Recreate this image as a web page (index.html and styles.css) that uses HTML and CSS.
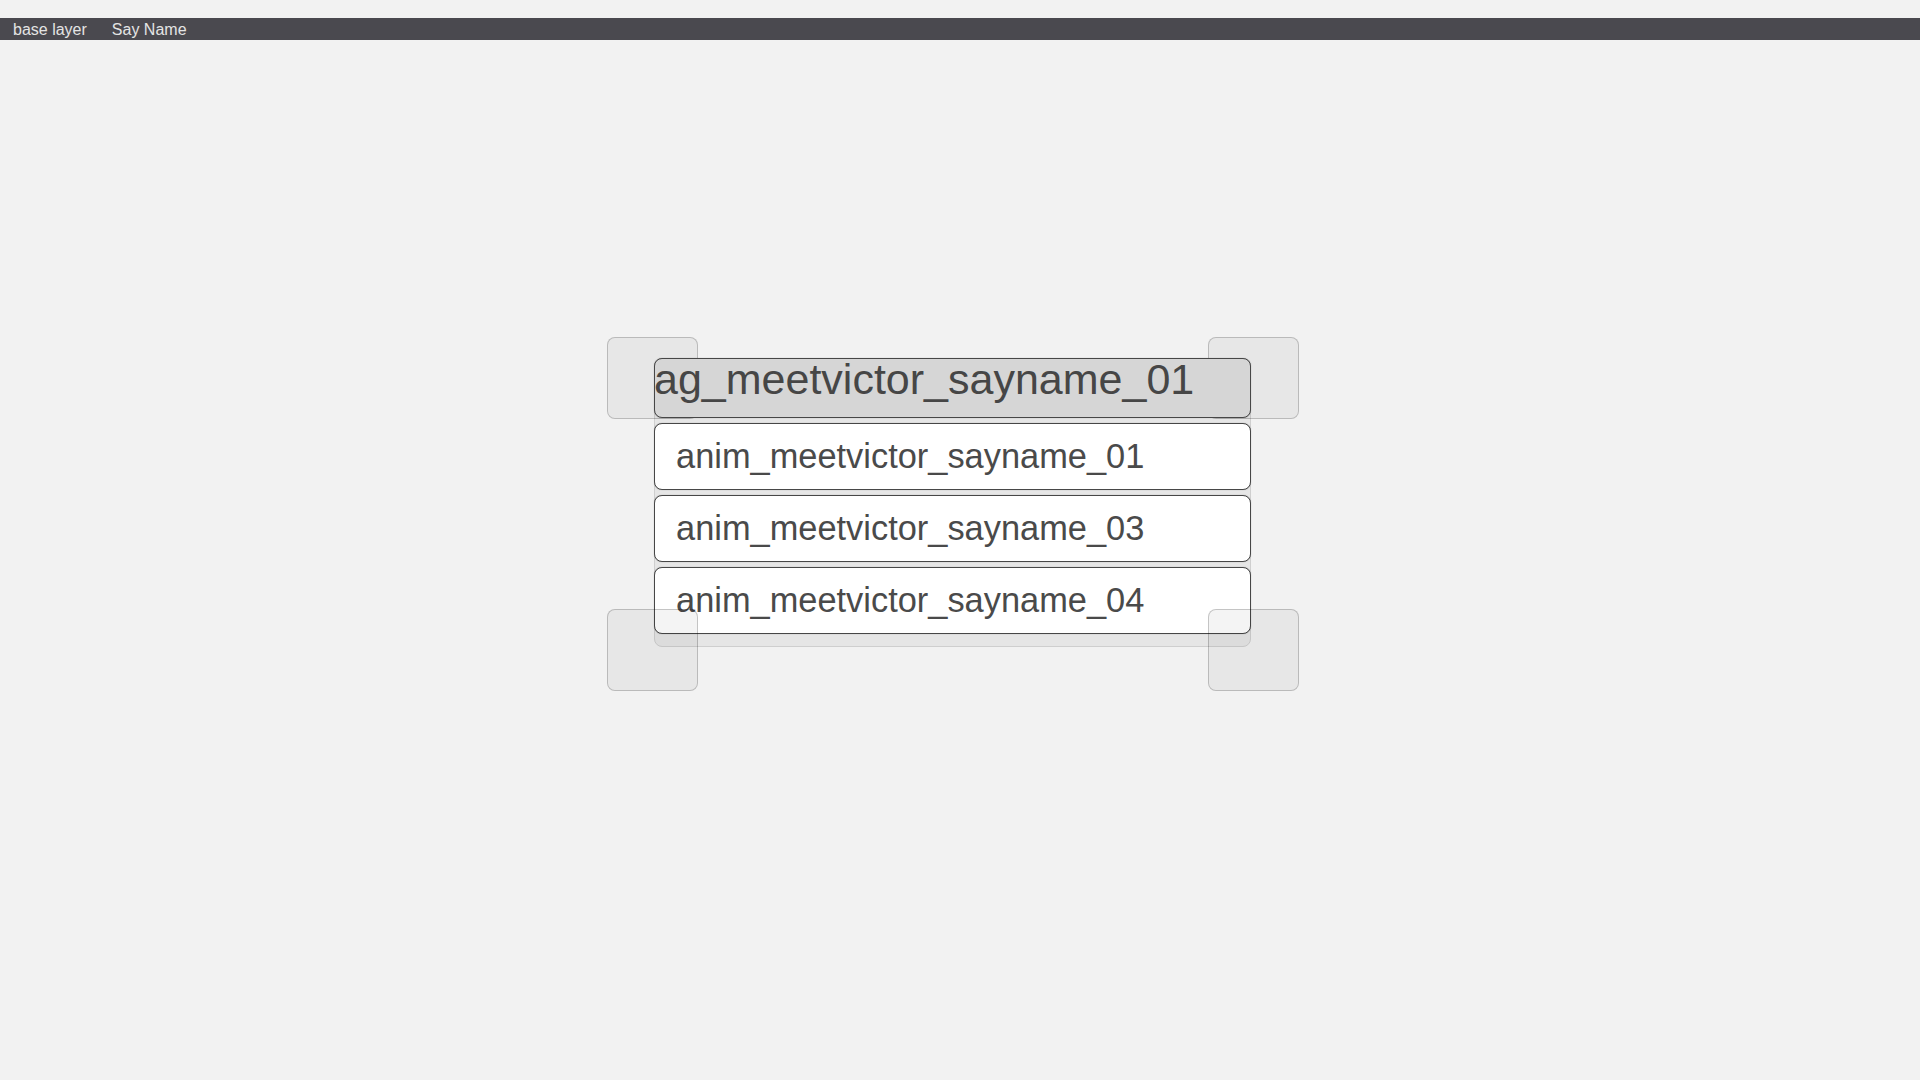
FILE: index.html
```html
<!DOCTYPE html>
<html>
<head>
<meta charset="utf-8">
<title>Say Name</title>
<link rel="stylesheet" href="styles.css">
</head>
<body>
<div class="topbar">
  <span class="crumb">base layer</span>
  <span class="crumb">Say Name</span>
</div>
<main class="stage">
  <div class="widget">
    <div class="handle tl"></div>
    <div class="handle tr"></div>
    <div class="handle bl"></div>
    <div class="handle br"></div>
    <div class="panel">
      <div class="header">ag_meetvictor_sayname_01</div>
      <ul class="list">
        <li class="item">anim_meetvictor_sayname_01</li>
        <li class="item">anim_meetvictor_sayname_03</li>
        <li class="item">anim_meetvictor_sayname_04</li>
      </ul>
    </div>
  </div>
</main>
</body>
</html>
```
FILE: styles.css
```css
html, body {
  margin: 0;
  padding: 0;
  background: #f2f2f2;
  font-family: "Liberation Sans", Arial, sans-serif;
}
body {
  width: 1920px;
  height: 1080px;
  overflow: hidden;
}
.topbar {
  margin-top: 18px;
  height: 22px;
  background: #4a494f;
  display: flex;
  align-items: center;
  gap: 25px;
  padding-left: 13px;
  box-sizing: border-box;
}
.crumb {
  color: #e4e4e4;
  font-size: 16px;
  line-height: 22px;
  padding-top: 1px;
}
.stage {
  padding-top: 297px;
  padding-left: 607px;
}
.widget {
  position: relative;
  width: 692px;
  height: 354px;
}
.handle {
  position: absolute;
  width: 91px;
  height: 82px;
  box-sizing: border-box;
  border: 1px solid rgba(0, 0, 0, 0.2);
  border-radius: 8px;
  background: rgba(0, 0, 0, 0.045);
  z-index: 1;
}
.tl { left: 0; top: 0; }
.tr { right: 0; top: 0; }
.bl { left: 0; bottom: 0; }
.br { right: 0; bottom: 0; }
.panel {
  position: absolute;
  left: 47px;
  top: 21px;
  width: 597px;
  height: 289px;
  box-sizing: border-box;
  background: #e6e6e6;
  border: 1px solid #cfcfcf;
  border-radius: 8px;
  display: flex;
  flex-direction: column;
  gap: 5px;
}
.header {
  position: relative;
  z-index: 2;
  margin: -1px -1px 0 -1px;
  height: 60px;
  box-sizing: border-box;
  background: #d6d6d6;
  border: 1.5px solid #474747;
  border-radius: 8px;
  color: #464646;
  font-size: 43px;
  line-height: 41px;
  white-space: nowrap;
  padding: 0;
  text-indent: -1px;
  box-shadow: 0 0 1px rgba(0, 0, 0, 0.35);
}
.list {
  list-style: none;
  margin: 0 -1px;
  padding: 0;
  display: flex;
  flex-direction: column;
  gap: 5px;
}
.item {
  height: 67px;
  box-sizing: border-box;
  background: #ffffff;
  border: 1.5px solid #474747;
  border-radius: 8px;
  box-shadow: 0 0 1px rgba(0, 0, 0, 0.35);
  color: #4a4a4a;
  font-size: 34.4px;
  display: flex;
  align-items: center;
  padding-left: 21px;
  white-space: nowrap;
}
```
